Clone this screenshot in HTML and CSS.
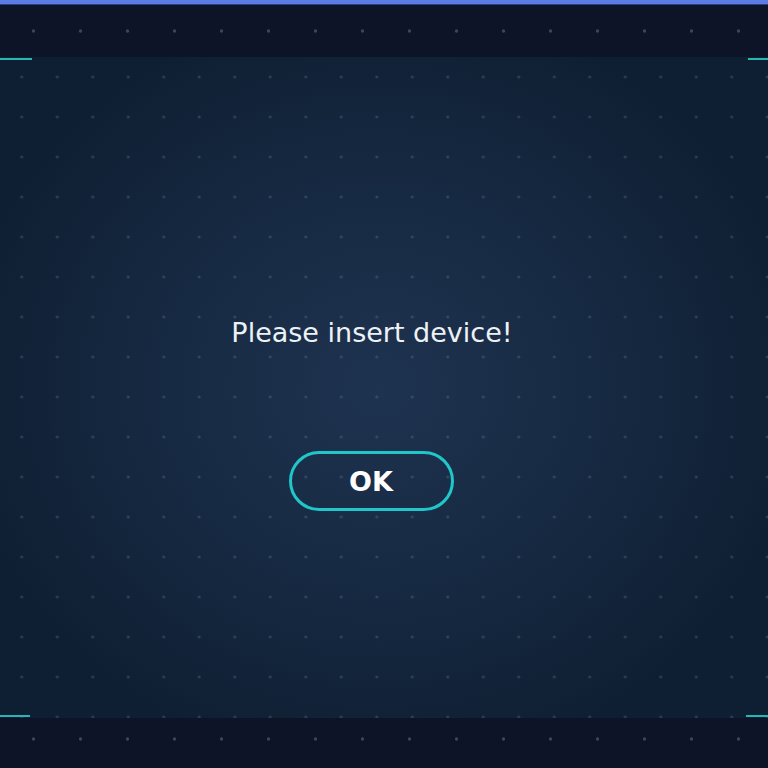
FILE: index.html
```html
<!DOCTYPE html>
<html lang="en">
<head>
    <meta charset="UTF-8">
    <meta name="viewport" content="width=device-width, initial-scale=1.0">
    <title>Device</title>
    <link rel="stylesheet" href="styles.css">
</head>
<body>
    <div class="topstrip"></div>
    <div class="band"></div>
    <!-- 메인 패널 -->
    <div class="panel">
        <span class="corner tl"></span>
        <span class="corner tr"></span>
        <span class="corner bl"></span>
        <span class="corner br"></span>
        <div class="msg">Please insert device!</div>
        <button type="button" class="ok_btn">OK</button>
    </div>
    <div class="band bottom"></div>
</body>
</html>
```

FILE: styles.css
```css
html, body{
    margin: 0; padding: 0;
    width: 768px; height: 768px; overflow: hidden;
}
body{
    display: flex; flex-direction: column;
    background-color: #0d1528;
    font-family: Tahoma, "DejaVu Sans", "Liberation Sans", sans-serif;
}
.topstrip{
    height: 4px; background-color: #5a7ce4;
    border-bottom: 1px solid #2b3f8a;
}
/* 위, 아래 어두운 띠 */
.band{
    height: 52px;
    background-color: #0d1428;
    background-image: radial-gradient(circle, rgba(120,140,180,0.4) 1.3px, transparent 2px);
    background-size: 47px 52px;
    background-position: 10px 0;
}
.band.bottom{ height: 50px; background-position: 10px -5px; }
.panel{
    position: relative;
    flex: 1;
    display: flex; flex-direction: column; align-items: center;
    background-image:
        radial-gradient(circle, rgba(110,140,180,0.28) 1.2px, transparent 1.8px),
        radial-gradient(ellipse 420px 380px at 380px 330px, #1e3350 0%, #172a43 50%, #0f1f33 100%);
    background-size: 35.5px 40px, 100% 100%;
    background-position: 4px 0, 0 0;
}
.corner{
    position: absolute; width: 32px; height: 2px;
    background-color: #2bb5b0;
}
.corner.tl{ left: 0; top: 1px; }
.corner.tr{ right: 0; top: 1px; width: 20px; }
.corner.bl{ left: 0; bottom: 1px; width: 30px; }
.corner.br{ right: 0; bottom: 1px; width: 22px; }
.msg{
    margin-top: 260px;
    margin-right: 24px;
    color: #eef2f6; font-size: 27px;
}
.ok_btn{
    margin-top: 103px; margin-right: 26px;
    width: 165px; height: 60px;
    border: 3px solid #20c6c8; border-radius: 30px;
    background-color: transparent;
    color: white; font-size: 27px; font-weight: bold;
    font-family: Tahoma, "DejaVu Sans", sans-serif;
}
```
